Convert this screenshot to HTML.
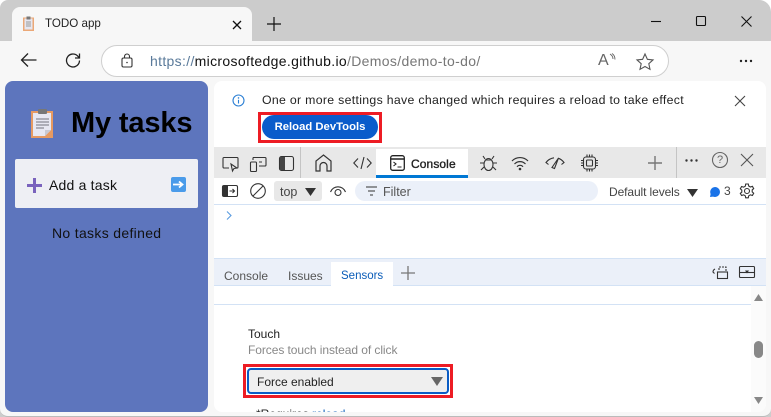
<!DOCTYPE html>
<html><head><meta charset="utf-8"><style>
html,body{margin:0;padding:0;width:771px;height:417px;overflow:hidden;background:#fff}
body{position:relative;font-family:"Liberation Sans",sans-serif;color:#111}
.a{position:absolute}
.t{position:absolute;white-space:nowrap;line-height:16px}
svg{position:absolute;overflow:visible;fill:none;stroke:#333;stroke-width:1.1}
</style></head><body>
<div class="a" style="left:0;top:0;width:771px;height:417px;background:#cccccc;border-radius:8px 12px 0 0"></div>
<div class="a" style="left:0;top:41px;width:771px;height:375px;background:#f7f7f7;border-radius:0 0 8px 8px;border-bottom:1px solid #bbb"></div>
<div class="a" style="left:12px;top:7px;width:240px;height:34px;background:#f7f7f7;border-radius:8px 8px 0 0"></div>

<svg style="left:22px;top:16px" width="14" height="16" viewBox="0 0 14 16"><rect x="1" y="1.5" width="11" height="13.5" fill="#eba877" stroke="none"/><rect x="2.5" y="2.5" width="8" height="11" fill="#e6e6f0" stroke="none"/><rect x="4.5" y="0.5" width="4" height="3" fill="#777" stroke="none"/><path d="M4 6h5M4 8h5M4 10h5" stroke="#999"/></svg>
<div class="t" style="left:45px;top:16px;font-size:11.6px;color:#222">TODO app</div>
<svg style="left:232px;top:20px" width="10" height="10" viewBox="0 0 10 10"><path d="M1 1l8 8M9 1l-8 8" stroke="#111" stroke-width="1.3"/></svg>
<svg style="left:267px;top:17px" width="14" height="14" viewBox="0 0 14 14"><path d="M7 0v14M0 7h14" stroke="#111" stroke-width="1.2"/></svg>
<svg style="left:650px;top:20px" width="12" height="2" viewBox="0 0 12 2"><path d="M1 1.5h10" stroke="#111"/></svg>
<svg style="left:696px;top:16px" width="10" height="10" viewBox="0 0 10 10"><rect x=".5" y=".5" width="9" height="9" rx="1" stroke="#111"/></svg>
<svg style="left:741px;top:16px" width="11" height="11" viewBox="0 0 11 11"><path d="M.5.5l10 10M10.5.5l-10 10" stroke="#111"/></svg>

<svg style="left:20px;top:52px" width="18" height="16" viewBox="0 0 18 16"><path d="M1.5 8h15M8 1.5L1.5 8 8 14.5" stroke="#222" stroke-width="1.3"/></svg>
<svg style="left:65px;top:52px" width="17" height="17" viewBox="0 0 17 17"><path d="M14.5 8.500a6.500 6.500 0 1 1-2-4.700L14.500 6M14.500 1.500V6H10" stroke="#222" stroke-width="1.3"/></svg>
<div class="a" style="left:101px;top:45px;width:566px;height:30px;background:#fff;border:1px solid #cfcfcf;border-radius:16px"></div>
<svg style="left:121px;top:53px" width="12" height="15" viewBox="0 0 12 15"><rect x="1" y="5" width="10" height="9" rx="1.5"/><path d="M3.500 5V3.500a2.500 2.500 0 0 1 5 0V5"/><circle cx="6" cy="9.500" r=".8" fill="#333" stroke="none"/></svg>
<div class="t" style="left:150px;top:53px;font-size:14px;letter-spacing:.33px;color:#777"><span style="color:#5a7a9a">https://</span><span style="color:#111">microsoftedge.github.io</span>/Demos/demo-to-do/</div>
<div class="t" style="left:598px;top:53px;font-size:16px;color:#666">A</div>
<svg style="left:609px;top:53px" width="7" height="9" viewBox="0 0 7 9"><path d="M1 1q3 2 3 5M3 .5q3 2 3 6" stroke="#666" stroke-width=".9"/></svg>
<svg style="left:636px;top:53px" width="18" height="17" viewBox="0 0 18 17"><path d="M9 1l2.400 5.300 5.600.6-4.200 3.800 1.200 5.600L9 13.500l-5 2.800 1.200-5.600L1 6.900l5.600-.6z" stroke="#555"/></svg>
<svg style="left:739px;top:59px" width="14" height="4" viewBox="0 0 14 4"><circle cx="2" cy="2" r="1.200" fill="#222" stroke="none"/><circle cx="7" cy="2" r="1.200" fill="#222" stroke="none"/><circle cx="12" cy="2" r="1.200" fill="#222" stroke="none"/></svg>

<div class="a" style="left:5px;top:81px;width:203px;height:331px;background:#5d75bd;border-radius:8px"></div>
<svg style="left:31px;top:108px" width="23" height="30" viewBox="0 0 23 30"><rect x="0" y="3" width="22" height="27" fill="#e69a62" stroke="none"/><path d="M2 5h18v17l-6 6H2z" fill="#e8e8f2" stroke="none"/><path d="M14 28l6-6h-6z" fill="#c9c9d3" stroke="none"/><rect x="7" y="1" width="9" height="5" rx="1" fill="#777" stroke="none"/><path d="M5 11h13M5 14h13M5 17h13M5 20h8" stroke="#8a8a96" stroke-width="1.3"/></svg>
<div class="t" style="left:71px;top:104px;font-size:29px;line-height:38px;font-weight:bold;color:#000;letter-spacing:-.15px">My tasks</div>
<div class="a" style="left:15px;top:159px;width:183px;height:49px;background:#eeeff4;border-radius:2px"></div>
<svg style="left:27px;top:178px" width="15" height="15" viewBox="0 0 15 15"><path d="M7.500 0v15M0 7.500h15" stroke="#7a63bd" stroke-width="3"/></svg>
<div class="t" style="left:49px;top:177px;font-size:14px;color:#111;letter-spacing:.2px">Add a task</div>
<div class="a" style="left:171px;top:177px;width:15px;height:15px;background:#4a9bea;border-radius:2px"></div>
<svg style="left:173px;top:180px" width="11" height="9" viewBox="0 0 11 9"><path d="M0 4.500h8M6 1.500l3.500 3-3.500 3" stroke="#fff" stroke-width="1.8"/></svg>
<div class="t" style="left:52px;top:225px;font-size:14px;color:#111;letter-spacing:.32px">No tasks defined</div>

<div class="a" style="left:214px;top:81px;width:552px;height:331px;background:#fff;border-radius:8px;overflow:hidden">
 <div class="a" style="left:0;top:66px;width:552px;height:31px;background:#e8e8e8"></div>
 <div class="a" style="left:162px;top:68px;width:92px;height:29px;background:#fff"></div>
 <div class="a" style="left:162px;top:94px;width:92px;height:3px;background:#0078d4"></div>
 <div class="a" style="left:0;top:123px;width:552px;height:1px;background:#d3e2f5"></div>
 <div class="a" style="left:0;top:177px;width:552px;height:28px;background:#ebf0f9;border-top:1px solid #d3e2f5;border-bottom:1px solid #d3e2f5;box-sizing:border-box"></div>
 <div class="a" style="left:117px;top:181px;width:62px;height:24px;background:#fff"></div>
 <div class="a" style="left:0;top:223px;width:537px;height:1px;background:#d3e2f5"></div>
 <div class="a" style="left:537px;top:205px;width:15px;height:126px;background:#fbfbfb"></div>
</div>

<svg style="left:232px;top:94px" width="13" height="13" viewBox="0 0 13 13"><circle cx="6.500" cy="6.500" r="5.500" stroke="#2b7fd4"/><path d="M6.500 5.800v3.700" stroke="#2b7fd4"/><circle cx="6.500" cy="3.900" r=".8" fill="#2b7fd4" stroke="none"/></svg>
<div class="t" style="left:262px;top:92px;font-size:12.3px;color:#222;letter-spacing:.31px">One or more settings have changed which requires a reload to take effect</div>
<svg style="left:735px;top:96px" width="10" height="10" viewBox="0 0 10 10"><path d="M0 0l10 10M10 0L0 10" stroke="#444"/></svg>
<div class="a" style="left:258px;top:112px;width:124px;height:31px;box-sizing:border-box;border:3px solid #ed1c24"></div>
<div class="a" style="left:262px;top:115px;width:116px;height:24px;background:#0a5ccb;border-radius:12px"></div>
<div class="t" style="left:262px;top:119px;width:116px;text-align:center;font-size:11.300px;font-weight:bold;color:#fff">Reload DevTools</div>

<svg style="left:222px;top:156px" width="17" height="16" viewBox="0 0 17 16"><path d="M7 12H2a1 1 0 0 1-1-1V2.500a1 1 0 0 1 1-1h13a1 1 0 0 1 1 1V11a1 1 0 0 1-1 1h-1M9 8l1.500 7 1.500-2.500 3-.5z"/></svg>
<svg style="left:250px;top:156px" width="17" height="16" viewBox="0 0 17 16"><rect x=".5" y="6" width="6" height="9.500" rx="1"/><path d="M3 1.500h12a1 1 0 0 1 1 1V9a1 1 0 0 1-1 1H9M3 4V1.500M9 6h3"/></svg>
<svg style="left:279px;top:156px" width="15" height="16" viewBox="0 0 15 16"><rect x=".5" y=".5" width="14" height="14" rx="2"/><path d="M1 1h5v13H1z" fill="#444" stroke="none"/></svg>
<div class="a" style="left:300px;top:147px;width:1px;height:31px;background:#c4c4c4"></div>
<svg style="left:315px;top:154px" width="17" height="18" viewBox="0 0 17 18"><path d="M1 17V7l7.500-6L16 7v10h-4v-5a3.500 3.500 0 0 0-7 0v5z" stroke-width="1.200"/></svg>
<svg style="left:353px;top:156px" width="19" height="14" viewBox="0 0 19 14"><path d="M5 2.500L.8 7 5 11.500M14 2.500L18.200 7 14 11.500M11 1L8 13"/></svg>
<svg style="left:390px;top:155px" width="15" height="16" viewBox="0 0 15 16"><rect x=".7" y=".7" width="13.600" height="14.600" rx="2" stroke="#222" stroke-width="1.300"/><path d="M1 4h13" stroke="#222" stroke-width="1.500"/><path d="M3.500 7l2.500 2-2.500 2M7.500 12h4" stroke="#222"/></svg>
<div class="t" style="left:411px;top:156px;font-size:12px;color:#222;-webkit-text-stroke:.35px #222;letter-spacing:.1px">Console</div>
<svg style="left:479px;top:154px" width="19" height="19" viewBox="0 0 19 19"><ellipse cx="9.500" cy="10.500" rx="4.500" ry="6"/><path d="M6 5l-2-3M13 5l2-3M5 9H1M14 9h4M5 13l-3 3M14 13l3 3M6 6h7"/></svg>
<svg style="left:511px;top:156px" width="18" height="15" viewBox="0 0 18 15"><path d="M1 5a11 11 0 0 1 16 0M3.500 8a7.500 7.500 0 0 1 11 0M6 10.800a3.800 3.800 0 0 1 6 0" stroke-width="1.200"/><circle cx="9" cy="13" r="1.300" fill="#333" stroke="none"/></svg>
<svg style="left:545px;top:156px" width="20" height="13" viewBox="0 0 20 13"><path d="M3.500 8.500L1 6.500Q4 2.500 9 1.800M13 2.200Q16.500 3.200 19 6.500L16.500 8.500M13.500 2L9.500 12.500 7 11.500z"/></svg>
<svg style="left:581px;top:154px" width="17" height="18" viewBox="0 0 17 18"><rect x="2.500" y="3" width="12" height="12" rx="2.500"/><rect x="5.500" y="6" width="6" height="6" rx="1"/><path d="M6 .5V3M8.500.5V3M11 .5V3M6 15v2.500M8.500 15v2.500M11 15v2.500M0 6.500h2.500M0 9h2.500M0 11.500h2.500M14.500 6.500H17M14.500 9H17M14.500 11.500H17"/></svg>
<svg style="left:648px;top:156px" width="14" height="14" viewBox="0 0 14 14"><path d="M7 0v14M0 7h14" stroke="#777" stroke-width="1.400"/></svg>
<div class="a" style="left:676px;top:147px;width:1px;height:31px;background:#c4c4c4"></div>
<svg style="left:685px;top:159px" width="13" height="3" viewBox="0 0 13 3"><circle cx="1.500" cy="1.500" r="1.200" fill="#333" stroke="none"/><circle cx="6.500" cy="1.500" r="1.200" fill="#333" stroke="none"/><circle cx="11.500" cy="1.500" r="1.200" fill="#333" stroke="none"/></svg>
<svg style="left:712px;top:152px" width="16" height="16" viewBox="0 0 16 16"><circle cx="8" cy="8" r="7.500" stroke="#666"/></svg>
<div class="t" style="left:712px;top:152px;width:16px;text-align:center;font-size:11px;color:#666">?</div>
<svg style="left:741px;top:154px" width="12" height="12" viewBox="0 0 12 12"><path d="M0 0l12 12M12 0L0 12" stroke="#555"/></svg>

<svg style="left:222px;top:185px" width="16" height="12" viewBox="0 0 16 12"><rect x=".5" y=".5" width="15" height="11" rx="1.500"/><path d="M1 1h5v10H1z" fill="#333" stroke="none"/><path d="M7.500 6h5M10.500 4l2 2-2 2"/></svg>
<svg style="left:250px;top:183px" width="16" height="16" viewBox="0 0 16 16"><circle cx="8" cy="8" r="7.300"/><path d="M3 13L13 3"/></svg>
<div class="a" style="left:274px;top:181px;width:48px;height:20px;background:#e8e8e8;border-radius:3px"></div>
<div class="t" style="left:280px;top:184px;font-size:12.500px;color:#444">top</div>
<svg style="left:305px;top:188px" width="11" height="8" viewBox="0 0 11 8"><path d="M0 0h11L5.500 8z" fill="#333" stroke="none"/></svg>
<svg style="left:330px;top:186px" width="16" height="11" viewBox="0 0 16 11"><path d="M.5 6a8 8 0 0 1 15 0"/><circle cx="8" cy="6.500" r="3"/></svg>
<div class="a" style="left:355px;top:181px;width:243px;height:20px;background:#ebf0f9;border-radius:10px"></div>
<svg style="left:366px;top:186px" width="11" height="10" viewBox="0 0 11 10"><path d="M0 1h11M2 5h7M4 9h3"/></svg>
<div class="t" style="left:383px;top:184px;font-size:12.500px;color:#555">Filter</div>
<div class="t" style="left:609px;top:184px;font-size:12px;color:#444;letter-spacing:-.1px">Default levels</div>
<svg style="left:687px;top:189px" width="11" height="8" viewBox="0 0 11 8"><path d="M0 0h11L5.500 8z" fill="#333" stroke="none"/></svg>
<svg style="left:710px;top:187px" width="10" height="10" viewBox="0 0 10 10"><path d="M5 0a5 5 0 1 1-2 9.600L0 10l.6-3A5 5 0 0 1 5 0z" fill="#1a73e8" stroke="none"/></svg>
<div class="t" style="left:724px;top:183px;font-size:12px;color:#444">3</div>
<svg style="left:739px;top:183px" width="16" height="16" viewBox="0 0 16 16"><circle cx="8" cy="8" r="2.500"/><path d="M6.700 1h2.600l.4 2 1.700 1 2-.7 1.300 2.300-1.500 1.300v2l1.500 1.300-1.300 2.300-2-.7-1.700 1-.4 2H6.700l-.4-2-1.700-1-2 .7L1.300 10.400l1.500-1.300v-2L1.300 5.800 2.600 3.500l2 .7 1.700-1z"/></svg>

<svg style="left:226px;top:211px" width="6" height="9" viewBox="0 0 6 9"><path d="M1 .5l4 4-4 4" stroke="#5a9be0"/></svg>

<div class="t" style="left:224px;top:268px;font-size:12px;color:#555">Console</div>
<div class="t" style="left:288px;top:268px;font-size:12px;color:#555">Issues</div>
<div class="t" style="left:341px;top:268px;font-size:11.500px;color:#0a5cb8">Sensors</div>
<svg style="left:401px;top:266px" width="14" height="14" viewBox="0 0 14 14"><path d="M7 0v14M0 7h14" stroke="#777" stroke-width="1.300"/></svg>
<svg style="left:712px;top:266px" width="16" height="13" viewBox="0 0 16 13"><rect x="5.500" y="6" width="10" height="6.500"/><path d="M7 4V1h7v4" stroke-dasharray="2 1"/><path d="M3 3Q1 4 1 6l1.500 1.500"/></svg>
<svg style="left:739px;top:266px" width="16" height="12" viewBox="0 0 16 12"><rect x=".5" y=".5" width="15" height="11" rx="1"/><path d="M1 6.500h14"/><path d="M6 4.500h4L8 7.500z" fill="#333" stroke="none"/></svg>

<svg style="left:754px;top:294px" width="9" height="7" viewBox="0 0 9 7"><path d="M0 7L4.500 0 9 7z" fill="#888" stroke="none"/></svg>
<div class="a" style="left:754px;top:341px;width:9px;height:17px;background:#888;border-radius:5px"></div>
<svg style="left:754px;top:397px" width="9" height="7" viewBox="0 0 9 7"><path d="M0 0L4.500 7 9 0z" fill="#888" stroke="none"/></svg>

<div class="t" style="left:248px;top:326px;font-size:12px;color:#222">Touch</div>
<div class="t" style="left:248px;top:342px;font-size:12px;color:#888;letter-spacing:-.07px">Forces touch instead of click</div>
<div class="a" style="left:243px;top:364px;width:210px;height:34px;box-sizing:border-box;border:3px solid #ed1c24"></div>
<div class="a" style="left:247px;top:368px;width:202px;height:26px;box-sizing:border-box;background:#efefef;border:2px solid #0a5cc4;border-radius:4px"></div>
<div class="t" style="left:257px;top:374px;font-size:12px;color:#222">Force enabled</div>
<svg style="left:431px;top:377px" width="12" height="9" viewBox="0 0 12 9"><path d="M0 0h12L6 9z" fill="#666" stroke="none"/></svg>
<div class="a" style="left:214px;top:404px;width:537px;height:8px;overflow:hidden">
 <div class="t" style="left:42px;top:2px;font-size:12px;color:#222">*Requires <span style="color:#0a5cb8">reload</span></div>
</div>
</body></html>
